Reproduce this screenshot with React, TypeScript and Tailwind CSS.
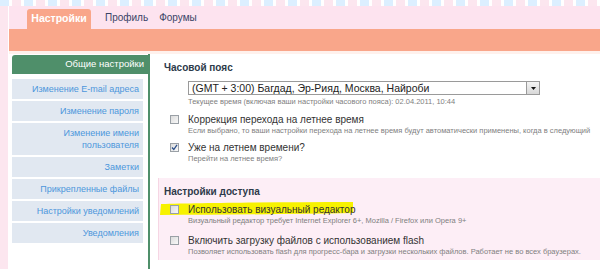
import React from "react";

const sideItems = [
  "Изменение E-mail адреса",
  "Изменение пароля",
  "Изменение имени пользователя",
  "Заметки",
  "Прикрепленные файлы",
  "Настройки уведомлений",
  "Уведомления",
];

function Box({ checked }: { checked?: boolean }) {
  return (
    <div className="w-[9px] h-[9px] mt-[1px] border border-[#9aa0a6] bg-gradient-to-br from-[#dcdcdc] to-[#f8f8f8] flex items-center justify-center shrink-0">
      {checked && (
        <svg width="7" height="7" viewBox="0 0 7 7">
          <path d="M1 3.5 L2.8 5.5 L6 0.8" stroke="#2b4f8a" strokeWidth="1.3" fill="none" />
        </svg>
      )}
    </div>
  );
}

function Option({ label, help, checked }: { label: string; help: string; checked?: boolean }) {
  return (
    <div className="flex gap-[9px] pl-[12px]">
      <Box checked={checked} />
      <div className="whitespace-nowrap">
        <div className="text-[10px] leading-[12px] text-[#333]">{label}</div>
        <div className="text-[7.5px] leading-[10px] text-[#808080]">{help}</div>
      </div>
    </div>
  );
}

export default function App() {
  return (
    <div
      className="w-[600px] h-[269px] overflow-hidden bg-[#fce6ef] flex flex-col"
      style={{ fontFamily: '"Liberation Sans", Arial, sans-serif' }}
    >
      {/* stripe */}
      <div className="h-[6px] shrink-0 bg-[repeating-linear-gradient(90deg,#dcefff_0px,#dcefff_9px,#ffffff_9px,#ffffff_12px,#fce6ef_12px,#fce6ef_21px,#ffffff_21px,#ffffff_24px)]" />

      <div className="flex-1 ml-[8px] border-l border-white flex flex-col min-h-0">
        {/* tabs */}
        <div className="h-[23px] bg-[#fde3ef] flex items-end pl-[18px] shrink-0">
          <div className="w-[64px] h-[20px] bg-[#f9a68a] rounded-t-[3px] flex items-center justify-center text-white font-bold text-[10.5px]">
            Настройки
          </div>
          <div className="h-[20px] flex items-center gap-[11px] pl-[14px] pb-[4px] text-[10px] text-[#3a4466]">
            <span>Профиль</span>
            <span>Форумы</span>
          </div>
        </div>
        <div className="h-[22px] bg-[#f9a68a] shrink-0" />
        <div className="h-[3px] bg-[#fff1ec] shrink-0" />

        {/* content */}
        <div className="flex-1 bg-white flex min-h-0">
          <div className="w-[138px] ml-[3px] border-r-2 border-[#4f8f6a] pt-[1px] flex flex-col gap-[2px]">
            <div className="h-[19px] bg-[#4f8f6a] rounded-tl-[3px] flex items-center justify-end pr-[4px] text-white text-[9.5px]">
              Общие настройки
            </div>
            <div className="h-[1px]" />
            {sideItems.map((t) => (
              <div
                key={t}
                className="mr-[5px] bg-[#e1e8f1] py-[4px] pr-[4px] pl-[8px] text-right text-[9px] leading-[12px] text-[#4d97dc]"
              >
                {t}
              </div>
            ))}
          </div>

          <div className="flex-1 min-w-0 flex flex-col">
            <div className="pt-[8px] pl-[14px]">
              <div className="text-[10px] leading-[12px] font-bold text-[#2d3a4a]">Часовой пояс</div>
              <div className="pl-[24px] mt-[7px]">
                <div className="w-[352px] h-[14px] border border-[#9a9a9a] flex items-center">
                  <div className="flex-1 pl-[3px] text-[10.5px] leading-[12px] text-[#222] whitespace-nowrap">
                    (GMT + 3:00) Багдад, Эр-Рияд, Москва, Найроби
                  </div>
                  <div className="w-[13px] h-[12px] border-l border-[#9a9a9a] bg-gradient-to-b from-[#f4f4f4] to-[#d8d8d8] flex items-center justify-center">
                    <svg width="5" height="3" viewBox="0 0 5 3">
                      <path d="M0 0 H5 L2.5 3 Z" fill="#111" />
                    </svg>
                  </div>
                </div>
                <div className="text-[7.5px] leading-[10px] text-[#808080] mt-[2px]">
                  Текущее время (включая ваши настройки часового пояса): 02.04.2011, 10:44
                </div>
              </div>
              <div className="mt-[7px] -ml-[6px] flex flex-col gap-[6px]">
                <Option
                  label="Коррекция перехода на летнее время"
                  help="Если выбрано, то ваши настройки перехода на летнее время будут автоматически применены, когда в следующий"
                />
                <Option label="Уже на летнем времени?" help="Перейти на летнее время?" checked />
              </div>
            </div>

            <div className="mt-[14px] ml-[8px] h-[82px] bg-[#fdeef6] border-l border-[#f6d6e4] pt-[8px] pl-[5px]">
              <div className="text-[10px] leading-[12px] font-bold text-[#2d3a4a]">Настройки доступа</div>
              <div className="mt-[6px] flex flex-col gap-[9px] -ml-[6px]">
                <div className="relative">
                  <svg
                    className="absolute left-[2px] top-[-2px]"
                    width="194"
                    height="14"
                    viewBox="0 0 194 14"
                  >
                    <path
                      d="M1 2 C40 1 120 0 193 0 L193 11 C130 12 60 13 0 13 Z"
                      fill="#f7f200"
                    />
                  </svg>
                  <div className="relative">
                    <Option
                      label="Использовать визуальный редактор"
                      help="Визуальный редактор требует Internet Explorer 6+, Mozilla / Firefox или Opera 9+"
                    />
                  </div>
                </div>
                <Option
                  label="Включить загрузку файлов с использованием flash"
                  help="Позволяет использовать flash для прогресс-бара и загрузки нескольких файлов. Работает не во всех браузерах."
                />
              </div>
            </div>
          </div>
        </div>
      </div>
    </div>
  );
}
